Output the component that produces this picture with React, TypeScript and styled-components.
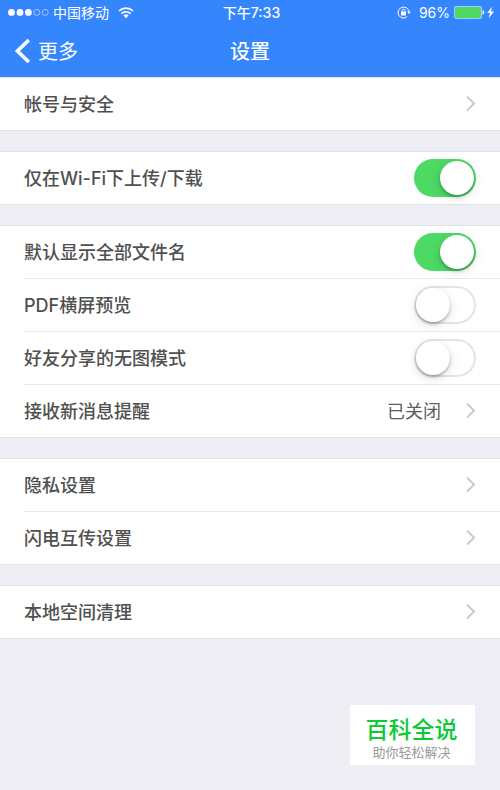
import React from "react";
import styled, { createGlobalStyle } from "styled-components";

const GlobalStyle = createGlobalStyle`
  *, *::before, *::after { box-sizing: border-box; }
  html, body, #root { min-height: 100vh; }
  body {
    margin: 0;
    background: #efeef4;
    color: #505050;
    font-family: Inter, "Noto Sans CJK SC", sans-serif;
  }
  button { font: inherit; color: inherit; border: 0; padding: 0; background: none; cursor: pointer; }
`;

const Page = styled.div`
  position: relative;
  min-height: 100vh;
`;

const Header = styled.header`
  background: #3585fd;
  color: #fff;
`;

const StatusBar = styled.div`
  display: grid;
  grid-template-columns: 1fr auto 1fr;
  align-items: center;
  height: 25px;
  padding: 0 5px 0 8px;
  font-size: 14px;
  line-height: 24px;
`;

const StatusGroup = styled.div<{ $end?: boolean }>`
  display: flex;
  align-items: center;
  justify-content: ${(p) => (p.$end ? "flex-end" : "flex-start")};
`;

const Carrier = styled.span`
  margin: 0 9px 0 4px;
`;

const Time = styled.span`
  font-weight: 500;
`;

const Percent = styled.span`
  margin: 0 4px 0 8px;
`;

const NavBar = styled.nav`
  display: grid;
  grid-template-columns: 1fr auto 1fr;
  align-items: center;
  height: 52px;
  padding: 0 14px;
`;

const BackButton = styled.button`
  display: flex;
  align-items: center;
  justify-self: start;
  gap: 7px;
  font-size: 20px;
  line-height: 28px;
`;

const BackLabel = styled.span`
  padding-top: 2px;
`;

const Title = styled.h1`
  margin: 0;
  padding-top: 2px;
  font-size: 20px;
  line-height: 28px;
  font-weight: 500;
`;

const Groups = styled.main`
  display: flex;
  flex-direction: column;
  gap: 20px;
`;

const Group = styled.section`
  background: #fff;
  border-top: 1px solid #e2e2e6;
  border-bottom: 1px solid #e2e2e6;
`;

const Row = styled.div`
  padding-left: 24px;

  & + & > * {
    border-top: 1px solid #e8e8ea;
    min-height: 53px;
  }

  & > * {
    display: flex;
    align-items: center;
    width: 100%;
    min-height: 52px;
    padding-right: 24px;
    font-size: 18px;
    line-height: 26px;
    text-align: left;
  }
`;

const Label = styled.span`
  flex: 1;
  padding-top: 2px;
  font-weight: 500;
`;

const Value = styled.span`
  margin-right: 24px;
  padding-top: 2px;
  color: #5e5e5e;
`;

const Switch = styled.input`
  appearance: none;
  display: flex;
  align-items: center;
  width: 62px;
  height: 38px;
  margin: 0;
  padding: 0 2px;
  border-radius: 19px;
  background: #fff;
  box-shadow: inset 0 0 0 2px #e4e4e4;
  cursor: pointer;

  &::before {
    content: "";
    width: 34px;
    height: 34px;
    border-radius: 50%;
    background: #fff;
    box-shadow: 0 2px 3px rgba(0, 0, 0, 0.26), 0 3px 12px rgba(0, 0, 0, 0.12);
  }

  &:checked {
    justify-content: flex-end;
    background: #4cd964;
    box-shadow: none;
  }
`;

const Badge = styled.aside`
  position: absolute;
  right: 25px;
  bottom: 25px;
  width: 125px;
  padding: 11px 2px 4px 0;
  background: #fff;
  text-align: center;
`;

const BadgeName = styled.div`
  color: #0acb32;
  font-size: 23px;
  line-height: 28px;
  font-weight: 500;
`;

const BadgeNote = styled.div`
  color: #999;
  font-size: 13px;
  line-height: 17px;
`;

const Chevron = () => (
  <svg width="11" height="18" viewBox="0 0 11 18" fill="none" aria-hidden="true">
    <path d="M2 1.6l7 7-7 7" stroke="#c7c7cc" strokeWidth="2" />
  </svg>
);

const Signal = () => (
  <svg width="41" height="10" viewBox="0 0 41 10" role="img" aria-label="信号">
    <g fill="#fff">
      <circle cx="3.5" cy="4.4" r="3.4" />
      <circle cx="12" cy="4.4" r="3.4" />
      <circle cx="20.4" cy="4.4" r="3.4" />
    </g>
    <g fill="none" stroke="#fff" strokeWidth="0.8" opacity="0.65">
      <circle cx="28.8" cy="4.4" r="3" />
      <circle cx="37.2" cy="4.4" r="3" />
    </g>
  </svg>
);

const Wifi = () => (
  <svg width="16" height="12" viewBox="0 0 16 12" role="img" aria-label="Wi-Fi">
    <g fill="none" stroke="#fff" strokeWidth="1.6">
      <path d="M1 4a10 10 0 0 1 14 0" />
      <path d="M3.4 6.6a6.5 6.5 0 0 1 9.2 0" />
    </g>
    <path d="M8 11.2L5.4 8.6a3.7 3.7 0 0 1 5.2 0z" fill="#fff" />
  </svg>
);

const RotationLock = () => (
  <svg width="14" height="13" viewBox="0 0 14 13" role="img" aria-label="方向锁定">
    <path d="M12 5.6A5.5 5.5 0 1 0 10.2 10.7" fill="none" stroke="#fff" strokeWidth="1" />
    <path d="M10.2 5.4h3.6L12 8z" fill="#fff" />
    <rect x="4" y="5.6" width="5" height="4" rx="0.4" fill="#fff" />
    <path d="M5 6V4.7a1.5 1.5 0 0 1 3 0V6" fill="none" stroke="#fff" strokeWidth="0.9" />
  </svg>
);

const Battery = () => (
  <svg width="41" height="13" viewBox="0 0 41 13" role="img" aria-label="正在充电">
    <rect x="0.5" y="0.5" width="27" height="12" rx="1.6" fill="#4cd964" stroke="#a9cbfb" />
    <path d="M28.6 4c2.2.4 2.2 4.4 0 4.8z" fill="#fff" />
    <path d="M38 0.8L33.2 7h2.8l-1.3 5.2L40 5.6h-3z" fill="#fff" />
  </svg>
);

const BackArrow = () => (
  <svg width="17" height="26" viewBox="0 0 17 26" fill="none" aria-hidden="true">
    <path d="M14.8 2L3.4 13l11.4 11" stroke="#fff" strokeWidth="3.6" />
  </svg>
);

type Item = { label: string; value?: string; on?: boolean };

const groups: Item[][] = [
  [{ label: "帐号与安全" }],
  [{ label: "仅在Wi-Fi下上传/下载", on: true }],
  [
    { label: "默认显示全部文件名", on: true },
    { label: "PDF横屏预览", on: false },
    { label: "好友分享的无图模式", on: false },
    { label: "接收新消息提醒", value: "已关闭" },
  ],
  [{ label: "隐私设置" }, { label: "闪电互传设置" }],
  [{ label: "本地空间清理" }],
];

const SettingRow = ({ label, value, on }: Item) => (
  <Row>
    {on === undefined ? (
      <button type="button">
        <Label>{label}</Label>
        {value && <Value>{value}</Value>}
        <Chevron />
      </button>
    ) : (
      <label>
        <Label>{label}</Label>
        <Switch type="checkbox" role="switch" defaultChecked={on} />
      </label>
    )}
  </Row>
);

export default function App() {
  return (
    <Page>
      <GlobalStyle />
      <Header>
        <StatusBar>
          <StatusGroup>
            <Signal />
            <Carrier>中国移动</Carrier>
            <Wifi />
          </StatusGroup>
          <Time>下午7:33</Time>
          <StatusGroup $end>
            <RotationLock />
            <Percent>96%</Percent>
            <Battery />
          </StatusGroup>
        </StatusBar>
        <NavBar>
          <BackButton type="button">
            <BackArrow />
            <BackLabel>更多</BackLabel>
          </BackButton>
          <Title>设置</Title>
        </NavBar>
      </Header>
      <Groups>
        {groups.map((items) => (
          <Group key={items[0].label}>
            {items.map((item) => (
              <SettingRow key={item.label} {...item} />
            ))}
          </Group>
        ))}
      </Groups>
      <Badge>
        <BadgeName>百科全说</BadgeName>
        <BadgeNote>助你轻松解决</BadgeNote>
      </Badge>
    </Page>
  );
}
